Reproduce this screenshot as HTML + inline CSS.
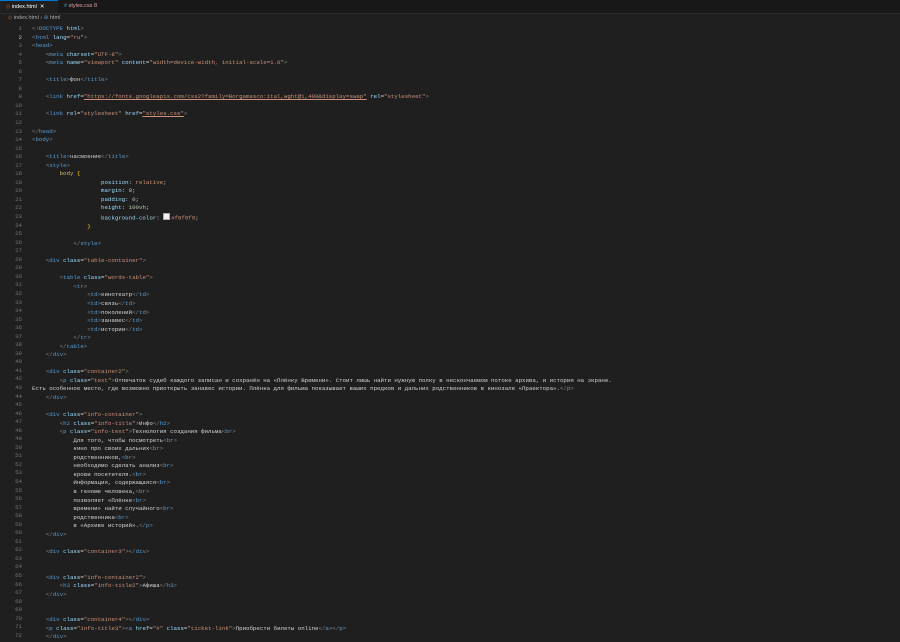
<!DOCTYPE html>
<html><head><meta charset="utf-8"><style>
html,body{margin:0;padding:0;width:900px;height:638px;overflow:hidden;background:#1f1f1f;font-family:"Liberation Mono","DejaVu Sans Mono",monospace;}
.tabs{position:absolute;left:0;top:0;width:900px;height:13px;background:#181818;border-bottom:1px solid #2b2b2b;}
.tab{position:absolute;top:0;height:13px;font:5.5px "Liberation Sans",sans-serif;line-height:13px;}
.t1{left:0;width:58px;background:#1f1f1f;border-top:1px solid #0078d4;color:#fff;box-sizing:border-box;padding-left:6px;}
.t2{left:58px;width:52px;color:#e2a0a0;padding-left:6px;}
.crumb{position:absolute;left:8px;top:15px;font:5.5px "Liberation Sans",sans-serif;color:#a9a9a9;}
.nums{position:absolute;left:0;top:25px;width:22px;text-align:right;font-size:5.75px;line-height:8.55px;color:#6e7681;white-space:pre;}
.code{position:absolute;left:32px;top:25px;font-size:5.75px;line-height:8.55px;color:#d4d4d4;white-space:pre;}
.p{color:#808080}.t{color:#569cd6}.a{color:#9cdcfe}.s{color:#ce9178}.y{color:#d7ba7d}.n{color:#b5cea8}.b{color:#ffd700}
.u{text-decoration:underline;text-decoration-color:#ce9178}
.sw{display:inline-block;width:5px;height:5px;background:#f0f0f0;border:0.5px solid #aaa;vertical-align:-0.5px;margin-right:1px}
</style></head><body>
<div class="tabs"><div class="tab t1"><span style="color:#e37933">◇</span> index.html &nbsp;✕</div><div class="tab t2"><span style="color:#519aba">#</span> styles.css 8</div></div>
<div class="crumb"><span style="color:#e37933">◇</span> index.html › <span style="color:#519aba">⊛</span> html</div>
<div class="nums">1
<span style="color:#ccc">2</span>
3
4
5
6
7
8
9
10
11
12
13
14
15
16
17
18
19
20
21
22
23
24
25
26
27
28
29
30
31
32
33
34
35
36
37
38
39
40
41
42
43
44
45
46
47
48
49
50
51
52
53
54
55
56
57
58
59
60
61
62
63
64
65
66
67
68
69
70
71
72</div>
<div class="code"><span class="p">&lt;!</span><span class="t">DOCTYPE</span> <span class="a">html</span><span class="p">&gt;</span>
<span class="p">&lt;</span><span class="t">html</span> <span class="a">lang</span>=<span class="s">"ru"</span><span class="p">&gt;</span>
<span class="p">&lt;</span><span class="t">head</span><span class="p">&gt;</span>
    <span class="p">&lt;</span><span class="t">meta</span> <span class="a">charset</span>=<span class="s">"UTF-8"</span><span class="p">&gt;</span>
    <span class="p">&lt;</span><span class="t">meta</span> <span class="a">name</span>=<span class="s">"viewport"</span> <span class="a">content</span>=<span class="s">"width=device-width, initial-scale=1.0"</span><span class="p">&gt;</span>

    <span class="p">&lt;</span><span class="t">title</span><span class="p">&gt;</span>фон<span class="p">&lt;/</span><span class="t">title</span><span class="p">&gt;</span>

    <span class="p">&lt;</span><span class="t">link</span> <span class="a">href</span>=<span class="s u">"https://fonts.googleapis.com/css2?family=Borgamasco:ital,wght@1,400&amp;display=swap"</span> <span class="a">rel</span>=<span class="s">"stylesheet"</span><span class="p">&gt;</span>

    <span class="p">&lt;</span><span class="t">link</span> <span class="a">rel</span>=<span class="s">"stylesheet"</span> <span class="a">href</span>=<span class="s u">"styles.css"</span><span class="p">&gt;</span>

<span class="p">&lt;/</span><span class="t">head</span><span class="p">&gt;</span>
<span class="p">&lt;</span><span class="t">body</span><span class="p">&gt;</span>

    <span class="p">&lt;</span><span class="t">title</span><span class="p">&gt;</span>насмоение<span class="p">&lt;/</span><span class="t">title</span><span class="p">&gt;</span>
    <span class="p">&lt;</span><span class="t">style</span><span class="p">&gt;</span>
        <span class="y">body</span> <span class="b">{</span>
                    <span class="a">position</span>: <span class="s">relative</span>;
                    <span class="a">margin</span>: <span class="n">0</span>;
                    <span class="a">padding</span>: <span class="n">0</span>;
                    <span class="a">height</span>: <span class="n">100vh</span>;
                    <span class="a">background-color</span>: <span class="sw"></span><span class="s">#f0f0f0</span>;
                <span class="b">}</span>

            <span class="p">&lt;/</span><span class="t">style</span><span class="p">&gt;</span>

    <span class="p">&lt;</span><span class="t">div</span> <span class="a">class</span>=<span class="s">"table-container"</span><span class="p">&gt;</span>

        <span class="p">&lt;</span><span class="t">table</span> <span class="a">class</span>=<span class="s">"words-table"</span><span class="p">&gt;</span>
            <span class="p">&lt;</span><span class="t">tr</span><span class="p">&gt;</span>
                <span class="p">&lt;</span><span class="t">td</span><span class="p">&gt;</span>кинотеатр<span class="p">&lt;/</span><span class="t">td</span><span class="p">&gt;</span>
                <span class="p">&lt;</span><span class="t">td</span><span class="p">&gt;</span>связь<span class="p">&lt;/</span><span class="t">td</span><span class="p">&gt;</span>
                <span class="p">&lt;</span><span class="t">td</span><span class="p">&gt;</span>поколений<span class="p">&lt;/</span><span class="t">td</span><span class="p">&gt;</span>
                <span class="p">&lt;</span><span class="t">td</span><span class="p">&gt;</span>занавес<span class="p">&lt;/</span><span class="t">td</span><span class="p">&gt;</span>
                <span class="p">&lt;</span><span class="t">td</span><span class="p">&gt;</span>истории<span class="p">&lt;/</span><span class="t">td</span><span class="p">&gt;</span>
            <span class="p">&lt;/</span><span class="t">tr</span><span class="p">&gt;</span>
        <span class="p">&lt;/</span><span class="t">table</span><span class="p">&gt;</span>
    <span class="p">&lt;/</span><span class="t">div</span><span class="p">&gt;</span>

    <span class="p">&lt;</span><span class="t">div</span> <span class="a">class</span>=<span class="s">"container2"</span><span class="p">&gt;</span>
        <span class="p">&lt;</span><span class="t">p</span> <span class="a">class</span>=<span class="s">"text"</span><span class="p">&gt;</span>Отпечаток судеб каждого записан и сохранён на «Плёнку Времени». Стоит лишь найти нужную полку в нескончаемом потоке архива, и история на экране.
Есть особенное место, где возможно приоткрыть занавес истории. Плёнка для фильма показывает ваших предков и дальних родственников в кинозале «Праектора».<span class="p">&lt;/</span><span class="t">p</span><span class="p">&gt;</span>
    <span class="p">&lt;/</span><span class="t">div</span><span class="p">&gt;</span>

    <span class="p">&lt;</span><span class="t">div</span> <span class="a">class</span>=<span class="s">"info-container"</span><span class="p">&gt;</span>
        <span class="p">&lt;</span><span class="t">h2</span> <span class="a">class</span>=<span class="s">"info-title"</span><span class="p">&gt;</span>Инфо<span class="p">&lt;/</span><span class="t">h2</span><span class="p">&gt;</span>
        <span class="p">&lt;</span><span class="t">p</span> <span class="a">class</span>=<span class="s">"info-text"</span><span class="p">&gt;</span>Технология создания фильма<span class="p">&lt;</span><span class="t">br</span><span class="p">&gt;</span>
            Для того, чтобы посмотреть<span class="p">&lt;</span><span class="t">br</span><span class="p">&gt;</span>
            кино про своих дальних<span class="p">&lt;</span><span class="t">br</span><span class="p">&gt;</span>
            родственников,<span class="p">&lt;</span><span class="t">br</span><span class="p">&gt;</span>
            необходимо сделать анализ<span class="p">&lt;</span><span class="t">br</span><span class="p">&gt;</span>
            крови посетителя.<span class="p">&lt;</span><span class="t">br</span><span class="p">&gt;</span>
            Информация, содержащаяся<span class="p">&lt;</span><span class="t">br</span><span class="p">&gt;</span>
            в геноме человека,<span class="p">&lt;</span><span class="t">br</span><span class="p">&gt;</span>
            позволяет «Плёнке<span class="p">&lt;</span><span class="t">br</span><span class="p">&gt;</span>
            времени» найти случайного<span class="p">&lt;</span><span class="t">br</span><span class="p">&gt;</span>
            родственника<span class="p">&lt;</span><span class="t">br</span><span class="p">&gt;</span>
            в «Архиве историй».<span class="p">&lt;/</span><span class="t">p</span><span class="p">&gt;</span>
    <span class="p">&lt;/</span><span class="t">div</span><span class="p">&gt;</span>

    <span class="p">&lt;</span><span class="t">div</span> <span class="a">class</span>=<span class="s">"container3"</span><span class="p">&gt;&lt;/</span><span class="t">div</span><span class="p">&gt;</span>


    <span class="p">&lt;</span><span class="t">div</span> <span class="a">class</span>=<span class="s">"info-container2"</span><span class="p">&gt;</span>
        <span class="p">&lt;</span><span class="t">h3</span> <span class="a">class</span>=<span class="s">"info-title2"</span><span class="p">&gt;</span>Афиша<span class="p">&lt;/</span><span class="t">h3</span><span class="p">&gt;</span>
    <span class="p">&lt;/</span><span class="t">div</span><span class="p">&gt;</span>


    <span class="p">&lt;</span><span class="t">div</span> <span class="a">class</span>=<span class="s">"container4"</span><span class="p">&gt;&lt;/</span><span class="t">div</span><span class="p">&gt;</span>
    <span class="p">&lt;</span><span class="t">p</span> <span class="a">class</span>=<span class="s">"info-title3"</span><span class="p">&gt;&lt;</span><span class="t">a</span> <span class="a">href</span>=<span class="s">"#"</span> <span class="a">class</span>=<span class="s">"ticket-link"</span><span class="p">&gt;</span>Приобрести билеты online<span class="p">&lt;/</span><span class="t">a</span><span class="p">&gt;&lt;/</span><span class="t">p</span><span class="p">&gt;</span>
    <span class="p">&lt;/</span><span class="t">div</span><span class="p">&gt;</span></div>
</body></html>
